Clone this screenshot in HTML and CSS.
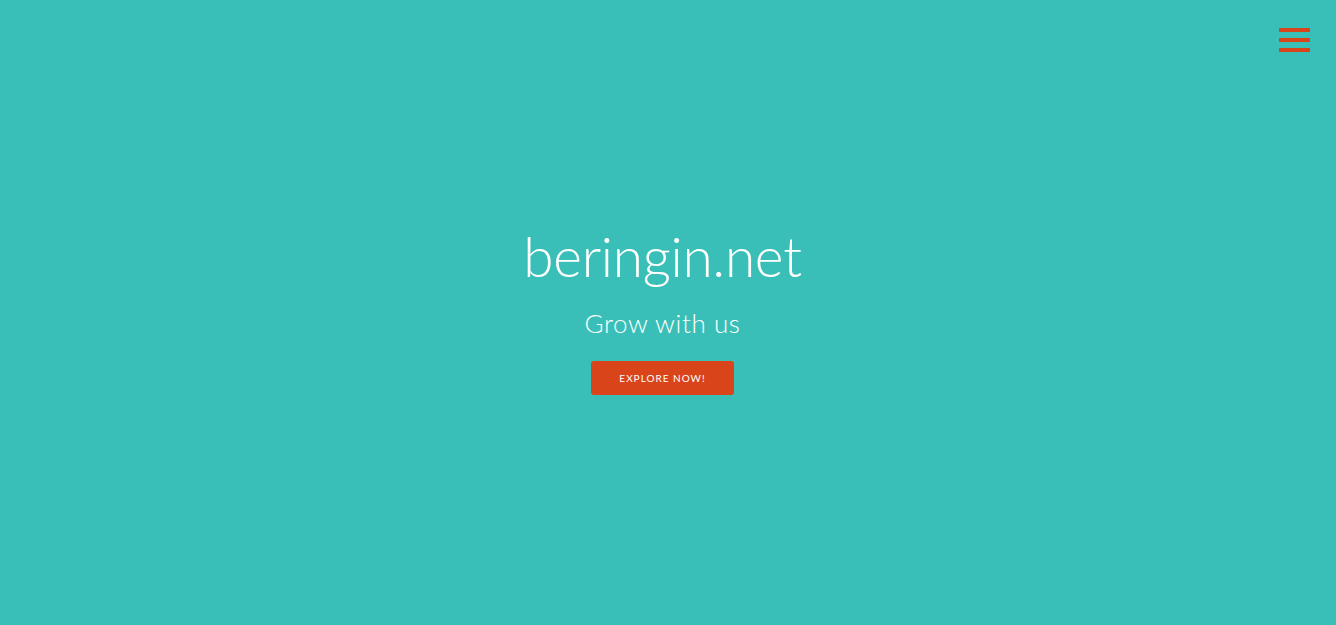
FILE: index.html
```html
<!DOCTYPE html>
<html>
<head>
<meta charset="utf-8">
<link rel="stylesheet" href="styles.css">
</head>
<body>
<header class="top">
  <button class="menu" aria-label="Menu"><span></span><span></span><span></span></button>
</header>
<main class="hero">
  <h1 class="title">beringin.net</h1>
  <p class="tagline">Grow with us</p>
  <a class="cta" href="#">Explore Now!</a>
</main>
</body>
</html>
```
FILE: styles.css
```css
html, body { margin: 0; padding: 0; height: 100%; }
body {
  background: #3abfb8;
  font-family: Lato, "Open Sans", sans-serif;
  color: #fff;
  overflow: hidden;
}
.top {
  display: flex;
  justify-content: flex-end;
  padding: 28px 26px 0 0;
  height: 24px;
}
.menu {
  display: flex;
  flex-direction: column;
  gap: 6px;
  padding: 0;
  border: 0;
  background: none;
  width: 31px;
}
.menu span { display: block; width: 31px; height: 4px; background: #d9441a; }
.hero {
  display: flex;
  flex-direction: column;
  align-items: center;
  padding: 172px 11px 0 0;
}
.title {
  margin: 0;
  font-weight: 300;
  font-size: 55px;
  line-height: 64px;
  letter-spacing: -0.3px;
}
.tagline {
  margin: 20px 0 0;
  font-weight: 300;
  font-size: 26px;
  line-height: 30px;
  letter-spacing: 0.6px;
}
.cta {
  margin-top: 23px;
  display: block;
  width: 143px;
  height: 34px;
  line-height: 34px;
  text-align: center;
  background: #d9441a;
  border-radius: 3px;
  color: #fff;
  text-decoration: none;
  text-transform: uppercase;
  font-size: 10px;
  letter-spacing: 1px;
  font-weight: 400;
}
```
